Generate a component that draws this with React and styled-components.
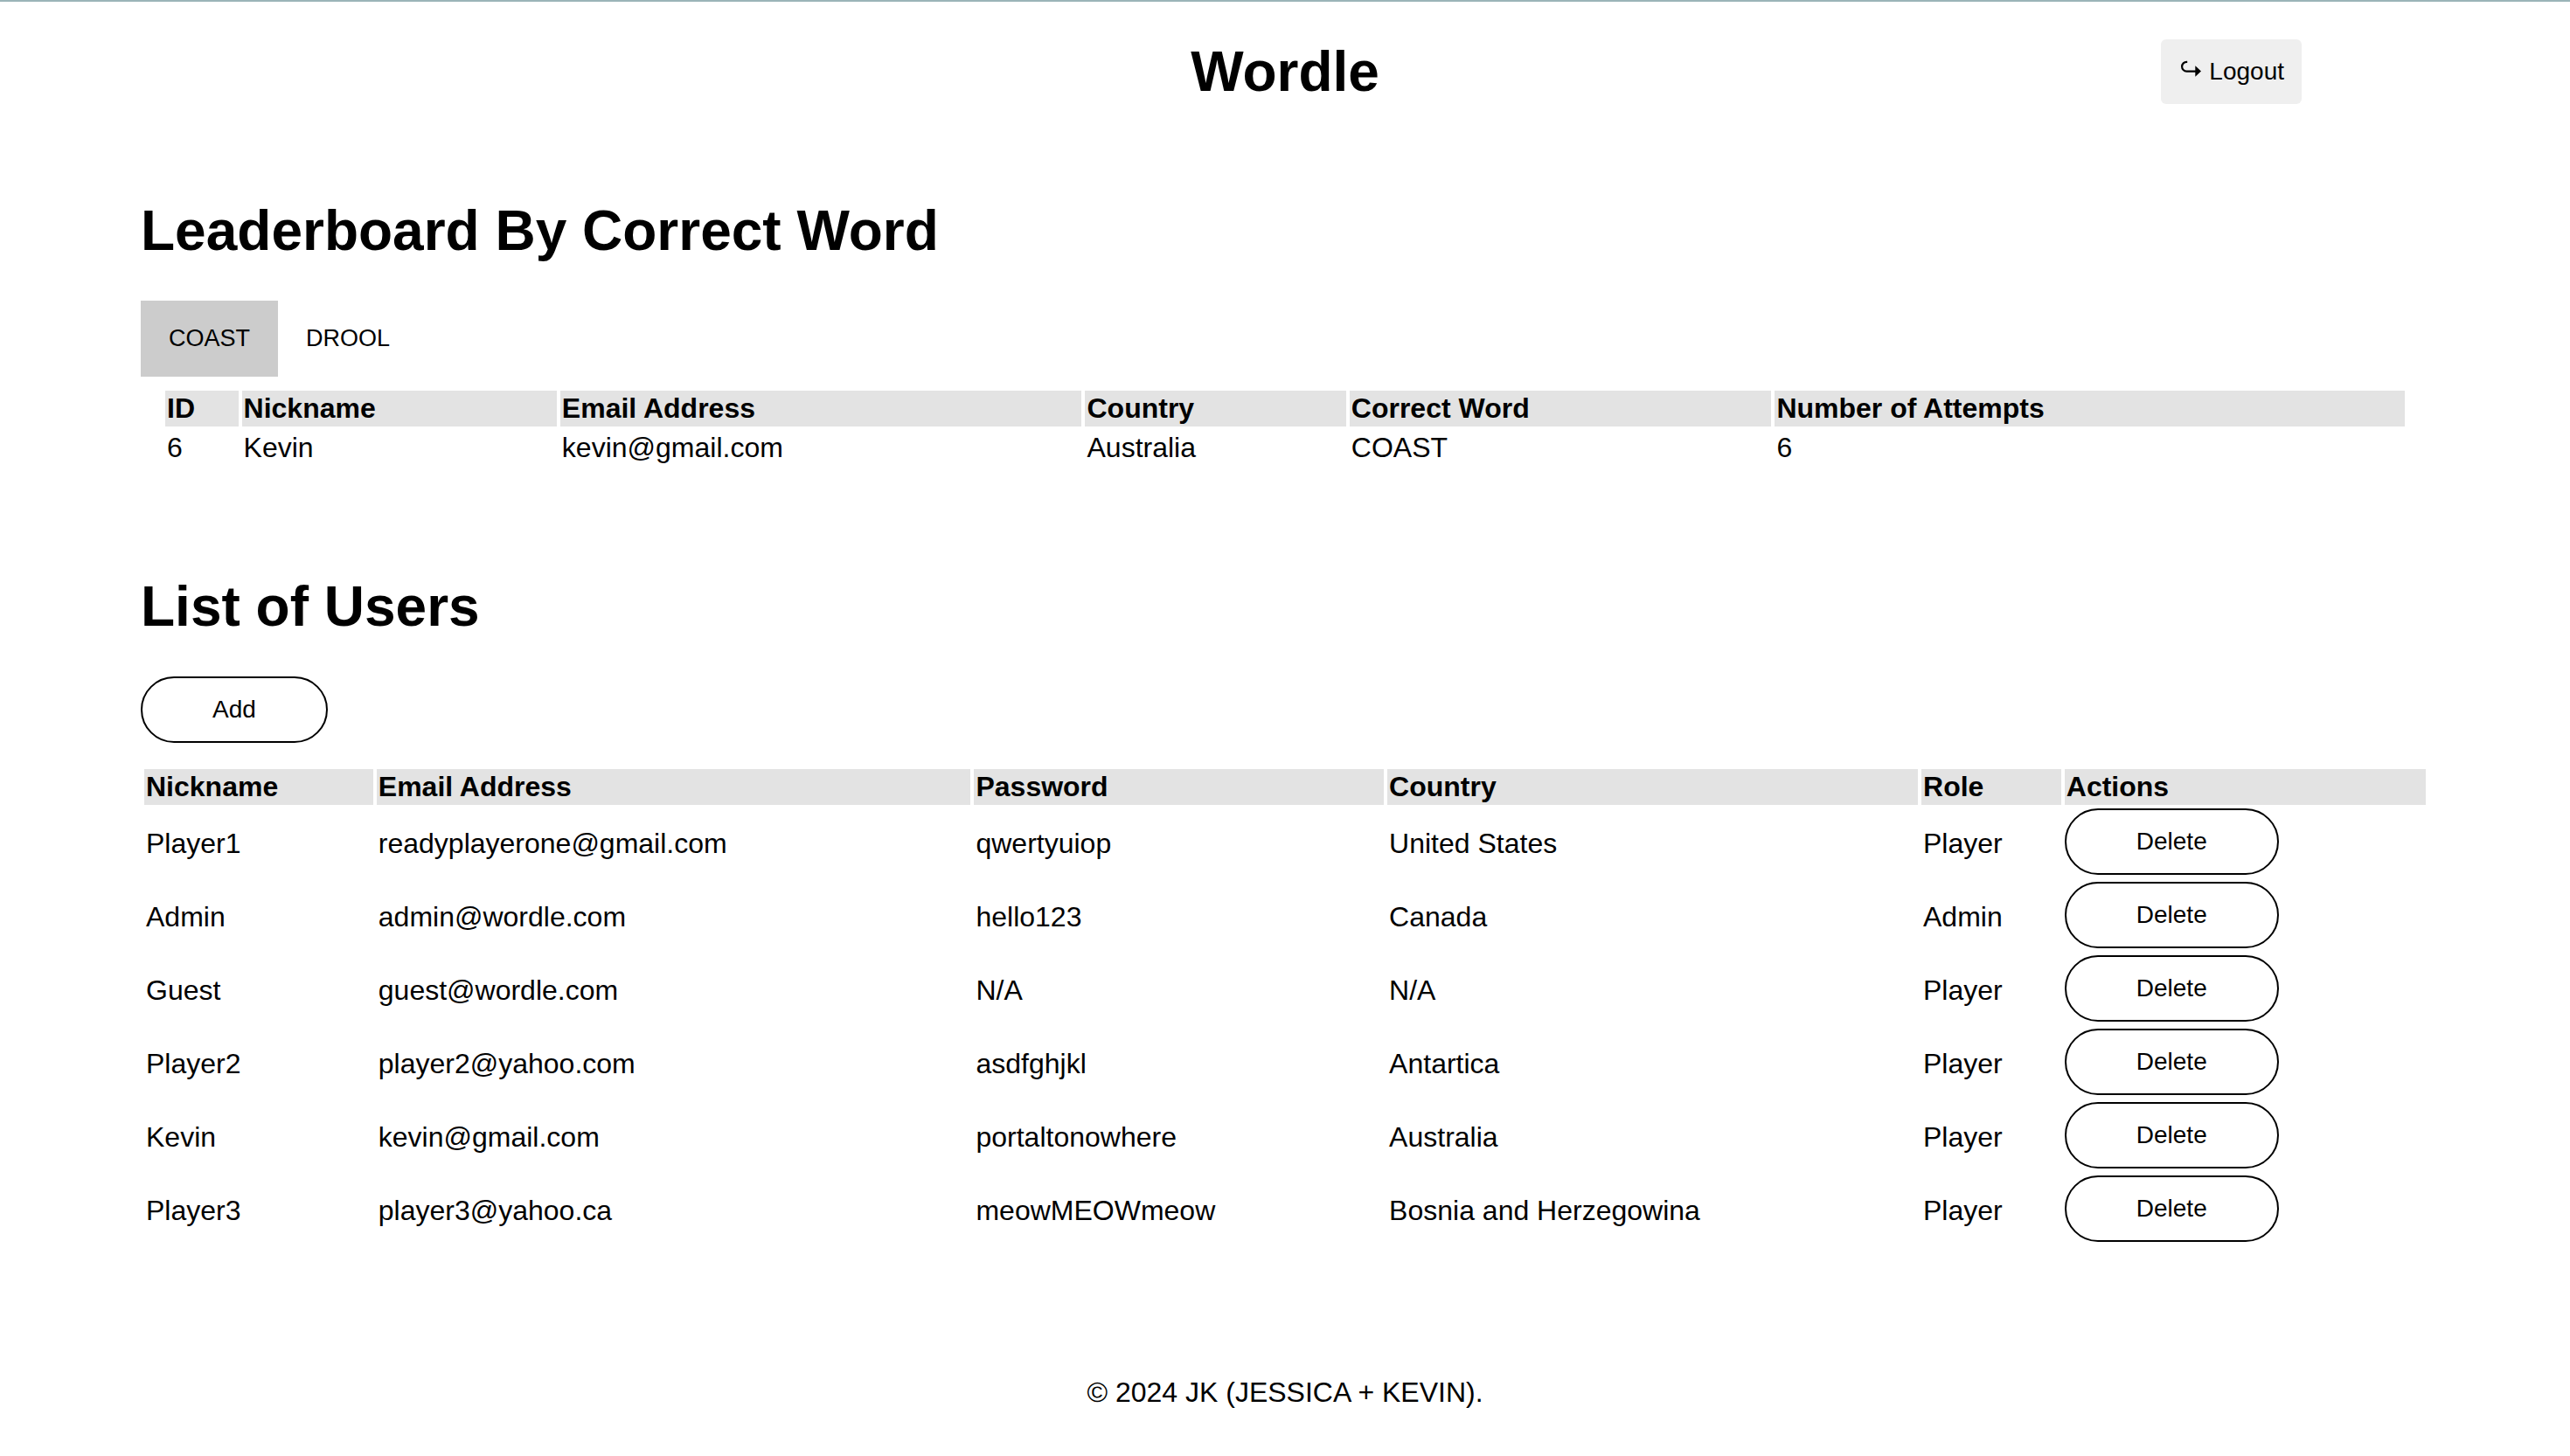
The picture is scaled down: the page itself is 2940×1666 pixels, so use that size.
import React, { useState } from "react";
import styled, { createGlobalStyle } from "styled-components";

const GlobalStyle = createGlobalStyle`
  *, *::before, *::after {
    box-sizing: border-box;
  }

  body {
    margin: 0;
    background: #ffffff;
    color: #000000;
    font-family: "Liberation Sans", Arial, Helvetica, sans-serif;
    font-size: 32px;
    line-height: 37px;
  }

  button {
    font-family: inherit;
    color: inherit;
    cursor: pointer;
  }
`;

const Page = styled.div`
  border-top: 2px solid #9bb4b8;
`;

const Header = styled.header`
  display: grid;
  grid-template-columns: 1fr auto 1fr;
  align-items: center;
  padding: 43px 307px 0;
`;

const Title = styled.h1`
  grid-column: 2;
  margin: 0;
  font-size: 64px;
  line-height: 74px;
`;

const LogoutButton = styled.button`
  display: flex;
  align-items: center;
  justify-self: end;
  gap: 8px;
  padding: 20px;
  border: 0;
  border-radius: 6px;
  background: #efefef;
  font-size: 28px;
  line-height: 34px;
`;

const ArrowIcon = styled.svg`
  display: block;
  width: 27px;
  height: 34px;
`;

const Main = styled.main`
  display: flex;
  flex-direction: column;
  gap: 108px;
  padding: 108px 161px 0;
`;

const SectionTitle = styled.h2`
  margin: 0 0 43px;
  font-size: 64px;
  line-height: 74px;
`;

const TabBar = styled.div`
  display: flex;
`;

const Tab = styled.button`
  padding: 28px 32px;
  border: 0;
  background: ${({ $active }) => ($active ? "#cccccc" : "transparent")};
  font-size: 27px;
  line-height: 31px;
`;

const TabPanel = styled.div`
  padding: 12px 24px;
`;

const Table = styled.table`
  width: 100%;
  border-collapse: separate;
  border-spacing: 4px;
`;

const HeadCell = styled.th`
  padding: 2px;
  background: #e3e3e3;
  text-align: left;
`;

const Cell = styled.td`
  padding: 2px;
`;

const ActionCell = styled.td`
  padding: 0 0 4px;
`;

const PillButton = styled.button`
  display: block;
  padding: 20px 80px;
  border: 2px solid #000000;
  border-radius: 40px;
  background: #ffffff;
  font-size: 28px;
  line-height: 32px;
`;

const Toolbar = styled.div`
  display: flex;
  margin-bottom: 26px;
`;

const Footer = styled.footer`
  padding: 146px 0 48px;
  text-align: center;
`;

const LEADERS = {
  COAST: [
    { id: 6, nickname: "Kevin", email: "kevin@gmail.com", country: "Australia", attempts: 6 },
  ],
  DROOL: [],
};

const USERS = [
  { nickname: "Player1", email: "readyplayerone@gmail.com", password: "qwertyuiop", country: "United States", role: "Player" },
  { nickname: "Admin", email: "admin@wordle.com", password: "hello123", country: "Canada", role: "Admin" },
  { nickname: "Guest", email: "guest@wordle.com", password: "N/A", country: "N/A", role: "Player" },
  { nickname: "Player2", email: "player2@yahoo.com", password: "asdfghjkl", country: "Antartica", role: "Player" },
  { nickname: "Kevin", email: "kevin@gmail.com", password: "portaltonowhere", country: "Australia", role: "Player" },
  { nickname: "Player3", email: "player3@yahoo.ca", password: "meowMEOWmeow", country: "Bosnia and Herzegowina", role: "Player" },
];

function TableHead({ labels }) {
  return (
    <thead>
      <tr>
        {labels.map((label) => (
          <HeadCell key={label} scope="col">{label}</HeadCell>
        ))}
      </tr>
    </thead>
  );
}

function Leaderboard() {
  const [word, setWord] = useState("COAST");

  return (
    <section>
      <SectionTitle>Leaderboard By Correct Word</SectionTitle>
      <TabBar role="tablist">
        {Object.keys(LEADERS).map((name) => (
          <Tab
            key={name}
            type="button"
            role="tab"
            aria-selected={name === word}
            $active={name === word}
            onClick={() => setWord(name)}
          >
            {name}
          </Tab>
        ))}
      </TabBar>
      <TabPanel role="tabpanel">
        <Table>
          <TableHead
            labels={["ID", "Nickname", "Email Address", "Country", "Correct Word", "Number of Attempts"]}
          />
          <tbody>
            {LEADERS[word].map((leader) => (
              <tr key={leader.id}>
                <Cell>{leader.id}</Cell>
                <Cell>{leader.nickname}</Cell>
                <Cell>{leader.email}</Cell>
                <Cell>{leader.country}</Cell>
                <Cell>{word}</Cell>
                <Cell>{leader.attempts}</Cell>
              </tr>
            ))}
          </tbody>
        </Table>
      </TabPanel>
    </section>
  );
}

function UserList() {
  const [users, setUsers] = useState(USERS);
  const remove = (nickname) => setUsers(users.filter((user) => user.nickname !== nickname));

  return (
    <section>
      <SectionTitle>List of Users</SectionTitle>
      <Toolbar>
        <PillButton type="button">Add</PillButton>
      </Toolbar>
      <Table>
        <TableHead labels={["Nickname", "Email Address", "Password", "Country", "Role", "Actions"]} />
        <tbody>
          {users.map((user) => (
            <tr key={user.nickname}>
              <Cell>{user.nickname}</Cell>
              <Cell>{user.email}</Cell>
              <Cell>{user.password}</Cell>
              <Cell>{user.country}</Cell>
              <Cell>{user.role}</Cell>
              <ActionCell>
                <PillButton type="button" onClick={() => remove(user.nickname)}>Delete</PillButton>
              </ActionCell>
            </tr>
          ))}
        </tbody>
      </Table>
    </section>
  );
}

export default function App() {
  return (
    <Page>
      <GlobalStyle />
      <Header>
        <Title>Wordle</Title>
        <LogoutButton type="button">
          <ArrowIcon viewBox="0 0 27 34" aria-hidden="true">
            <path
              d="M10.200 5.800H9.500A5.400 5.400 0 0 0 9.500 16.600H21"
              fill="none"
              stroke="#000000"
              strokeWidth="2.200"
            />
            <path d="M19.300 10.300L26 16.600L19.300 22.700Z" fill="#000000" />
          </ArrowIcon>
          Logout
        </LogoutButton>
      </Header>
      <Main>
        <Leaderboard />
        <UserList />
      </Main>
      <Footer>© 2024 JK (JESSICA + KEVIN).</Footer>
    </Page>
  );
}
